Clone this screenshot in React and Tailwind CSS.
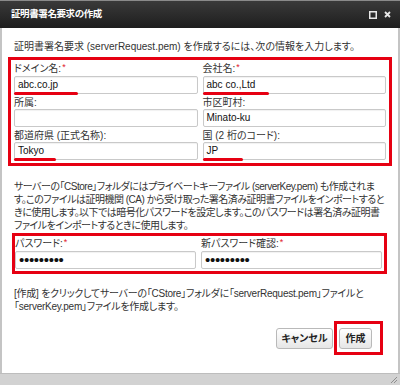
import React from 'react'

function Field({ label, required, value, mark, pw }) {
  return (
    <div className="flex flex-col">
      <div className="text-[10px] leading-[13px] text-[#333] whitespace-nowrap">
        {label}
        {required && <span className="text-[#e0202a] text-[9px] relative top-[-2px] ml-[1px]">*</span>}
      </div>
      <div className="relative h-[18px] border border-[#c9c9c9] rounded-[2px] bg-white shadow-[inset_0_1px_1px_rgba(0,0,0,0.06)] pl-[3px] flex items-center">
        {pw ? (
          <span className="font-['Liberation_Sans',sans-serif] text-[15px] leading-[16px] text-[#111] tracking-[-0.3px]">•••••••••</span>
        ) : (
          <span className="text-[10px] leading-[16px] text-[#111]">{value}</span>
        )}
        {mark && (
          <div
            className="absolute left-[-1px] bottom-[-2px] h-[3px] rounded-full bg-[#e60012]"
            style={{ width: mark }}
          />
        )}
      </div>
    </div>
  )
}

function Btn({ children, w }) {
  return (
    <button
      className="h-[21px] rounded-[3px] border border-[#b9b9b9] bg-gradient-to-b from-white to-[#e6e6e6] text-[10px] font-bold text-[#222] flex items-center justify-center"
      style={{ width: w }}
    >
      {children}
    </button>
  )
}

export default function App() {
  return (
    <div className="w-[400px] h-[385px] flex flex-col bg-white font-['Liberation_Sans','Noto_Sans_CJK_JP',sans-serif] [font-feature-settings:'palt']">
      {/* Title bar */}
      <div className="h-[28px] flex items-center justify-between bg-gradient-to-b from-[#3a3a3a] to-[#1e1e1e] border-t border-[#8a8a8a] pl-[11px] pr-[9px]">
        <span className="text-white text-[9.5px] font-bold tracking-[-0.4px]">証明書署名要求の作成</span>
        <div className="flex items-center gap-[7px]">
          <svg width="8" height="8" viewBox="0 0 8 8">
            <rect x="0.75" y="0.75" width="6.5" height="6.5" fill="none" stroke="#e8e8e8" strokeWidth="1.5" />
          </svg>
          <svg width="7" height="7" viewBox="0 0 7 7">
            <path d="M1 1L6 6M6 1L1 6" stroke="#e8e8e8" strokeWidth="1.8" />
          </svg>
        </div>
      </div>

      {/* Body */}
      <div className="flex-1 flex flex-col border-x-2 border-[#c4c4c4] text-[#333]">
        <div className="pt-[12px] pl-[12px] text-[10px] leading-[13px] whitespace-nowrap">
          証明書署名要求 (serverRequest.pem) を作成するには、次の情報を入力します。
        </div>

        <div className="mt-[4px] mx-[6px] border-[3px] border-[#e60012] pt-[2px] pb-[3px] px-[3px] grid grid-cols-2 gap-x-[5px] gap-y-[2px]">
          <Field label="ドメイン名:" required value="abc.co.jp" mark="64px" />
          <Field label="会社名:" required value="abc co.,Ltd" mark="66px" />
          <Field label="所属:" value="" />
          <Field label="市区町村:" value="Minato-ku" />
          <Field label="都道府県 (正式名称):" value="Tokyo" mark="42px" />
          <Field label="国 (2 桁のコード):" value="JP" mark="40px" />
        </div>

        <div className="mt-[14px] pl-[12px] text-[10px] leading-[13px] whitespace-nowrap tracking-[-0.5px]">
          <div>サーバーの「CStore」フォルダにはプライベートキーファイル (serverKey.pem) も作成されま</div>
          <div>す。このファイルは証明機関 (CA) から受け取った署名済み証明書ファイルをインポートすると</div>
          <div>きに使用します。以下では暗号化パスワードを設定します。このパスワードは署名済み証明書</div>
          <div>ファイルをインポートするときに使用します。</div>
        </div>

        <div className="mt-[1px] ml-[10px] mr-[11px] border-[3px] border-[#e60012] pt-[1px] pb-[2px] pr-[2px] grid grid-cols-2 gap-x-[5px]">
          <Field label="パスワード:" required pw />
          <Field label="新パスワード確認:" required pw />
        </div>

        <div className="mt-[13px] pl-[12px] text-[10px] leading-[13px] whitespace-nowrap tracking-[-0.25px]">
          <div>[作成] をクリックしてサーバーの「CStore」フォルダに「serverRequest.pem」ファイルと</div>
          <div>「serverKey.pem」ファイルを作成します。</div>
        </div>

        <div className="mt-[8px] mr-[15px] flex justify-end items-start">
          <div className="mt-[7px] mr-[1px]">
            <Btn w="57px">キャンセル</Btn>
          </div>
          <div className="border-[3px] border-[#e60012] pt-[4px] pb-[3px] pl-[2px] pr-[8px]">
            <Btn w="33px">作成</Btn>
          </div>
        </div>
      </div>

      {/* Status bar */}
      <div className="h-[12px] bg-[#d2d2d2] border-t border-[#bdbdbd] flex justify-end items-end pr-[2px] pb-[1px]">
        <svg width="9" height="9" viewBox="0 0 9 9">
          <path d="M8 2L2 8M8 5L5 8M8 8L8 8" stroke="#8e8e8e" strokeWidth="1" />
        </svg>
      </div>
    </div>
  )
}
